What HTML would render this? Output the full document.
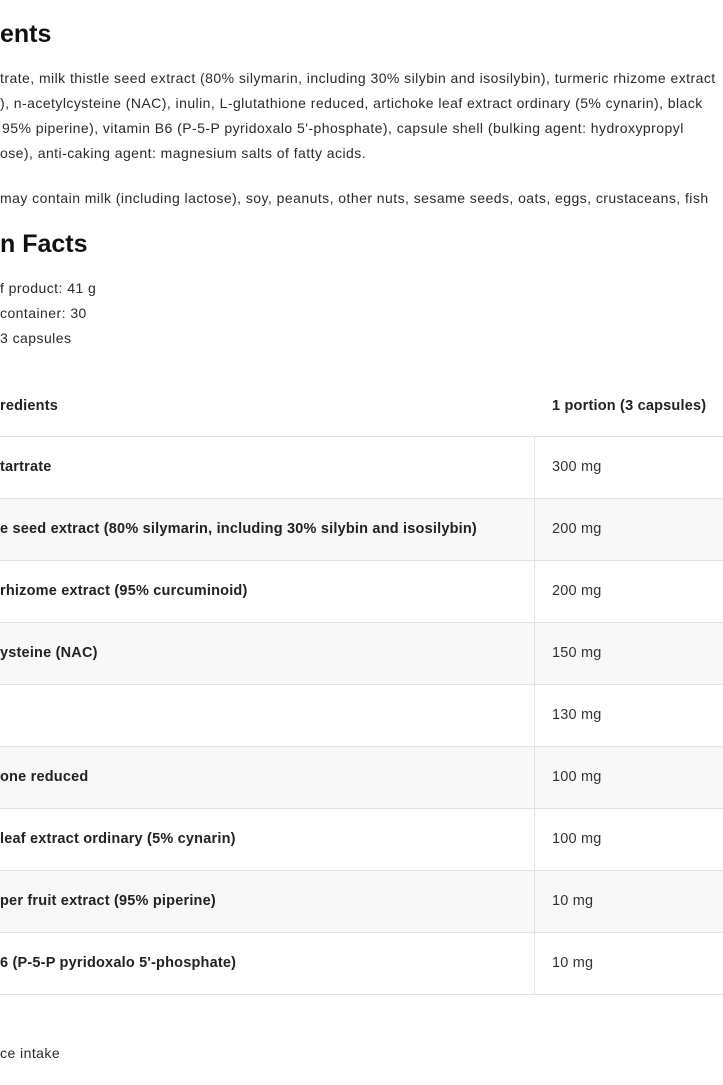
<!DOCTYPE html>
<html><head><meta charset="utf-8"><style>
html,body{margin:0;padding:0;width:723px;height:1085px;overflow:hidden;background:#fff;}
body{position:relative;font-family:"Liberation Sans",sans-serif;color:#222;}
.l{position:absolute;white-space:nowrap;font-size:14px;letter-spacing:0.45px;line-height:20px;color:#2a2a2a;}
.h{position:absolute;white-space:nowrap;font-size:25px;font-weight:bold;color:#111;line-height:30px;}
.row{position:absolute;left:0;width:723px;height:61px;border-bottom:1px solid #e2e2e2;}
.row.g{background:#f8f8f8;}
.row .a{position:absolute;left:0;top:22px;font-size:14.5px;letter-spacing:0.2px;font-weight:bold;color:#222;white-space:nowrap;}
.row .b{position:absolute;left:552px;top:22px;font-size:14.5px;letter-spacing:0.2px;color:#333;white-space:nowrap;}
.vl{position:absolute;left:534px;top:437px;width:1px;height:558px;background:#e2e2e2;}
</style></head><body>
<div class="h" style="left:0;top:19px">ents</div>
<div class="l" style="left:0;top:68px">trate, milk thistle seed extract (80% silymarin, including 30% silybin and isosilybin), turmeric rhizome extract</div>
<div class="l" style="left:0;top:93px">), n-acetylcysteine (NAC), inulin, L-glutathione reduced, artichoke leaf extract ordinary (5% cynarin), black</div>
<div class="l" style="left:2px;top:118px">95% piperine), vitamin B6 (P-5-P pyridoxalo 5'-phosphate), capsule shell (bulking agent: hydroxypropyl</div>
<div class="l" style="left:0;top:143px">ose), anti-caking agent: magnesium salts of fatty acids.</div>
<div class="l" style="left:0;top:188px">may contain milk (including lactose), soy, peanuts, other nuts, sesame seeds, oats, eggs, crustaceans, fish</div>
<div class="h" style="left:0;top:229px">n Facts</div>
<div class="l" style="left:0;top:278px">f product: 41 g</div>
<div class="l" style="left:0;top:303px">container: 30</div>
<div class="l" style="left:0;top:328px">3 capsules</div>
<div class="row" style="top:375px"><span class="a" style="top:23px">redients</span><span class="b" style="font-weight:bold;color:#222;top:23px">1 portion (3 capsules)</span></div>
<div class="row" style="top:437px"><span class="a">tartrate</span><span class="b">300 mg</span></div>
<div class="row g" style="top:499px"><span class="a">e seed extract (80% silymarin, including 30% silybin and isosilybin)</span><span class="b">200 mg</span></div>
<div class="row" style="top:561px"><span class="a">rhizome extract (95% curcuminoid)</span><span class="b">200 mg</span></div>
<div class="row g" style="top:623px"><span class="a">ysteine (NAC)</span><span class="b">150 mg</span></div>
<div class="row" style="top:685px"><span class="a"></span><span class="b">130 mg</span></div>
<div class="row g" style="top:747px"><span class="a">one reduced</span><span class="b">100 mg</span></div>
<div class="row" style="top:809px"><span class="a">leaf extract ordinary (5% cynarin)</span><span class="b">100 mg</span></div>
<div class="row g" style="top:871px"><span class="a">per fruit extract (95% piperine)</span><span class="b">10 mg</span></div>
<div class="row" style="top:933px"><span class="a">6 (P-5-P pyridoxalo 5'-phosphate)</span><span class="b">10 mg</span></div>
<div class="vl"></div>
<div class="l" style="left:0;top:1043px">ce intake</div>
</body></html>
